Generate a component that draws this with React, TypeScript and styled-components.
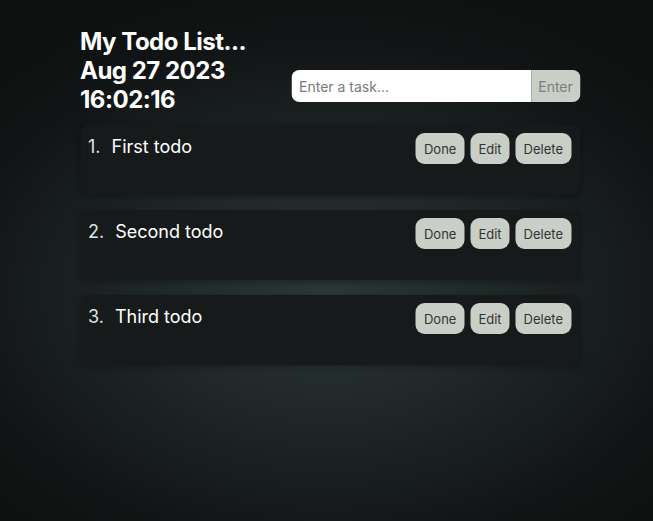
import React from "react";
import styled, { createGlobalStyle } from "styled-components";

const Global = createGlobalStyle`
  html, body { margin: 0; padding: 0; height: 100%; }
  body {
    font-family: Inter, "Noto Sans", sans-serif;
    background: radial-gradient(ellipse 70% 60% at 50% 56%, #2c3737 0%, #1e2525 45%, #121515 80%, #0f1111 100%);
    background-color: #121515;
    min-height: 521px;
  }
  #root { min-height: 521px; }
`;

const Page = styled.div`
  width: 500px;
  margin: 0 auto;
  padding-top: 27px;
  transform: translateX(3.5px);
`;

const Header = styled.header`
  display: flex;
  justify-content: space-between;
  align-items: flex-end;
  margin-bottom: 11px;
`;

const Title = styled.h1`
  margin: 0;
  font-size: 24px;
  line-height: 29px;
  font-weight: 700;
  color: #ffffff;
  letter-spacing: -0.5px;
`;

const Form = styled.form`
  display: flex;
  width: 289px;
  height: 32px;
  margin-bottom: 12px;
  border-radius: 8px;
  overflow: hidden;
`;

const Input = styled.input`
  flex: 1;
  min-width: 0;
  border: none;
  outline: none;
  padding: 0 8px;
  font-family: Inter, sans-serif;
  font-size: 14px;
  background: #ffffff;
  color: #333;
  &::placeholder { color: #7a7a7a; }
`;

const EnterButton = styled.button`
  width: 49px;
  border: none;
  background: #c9cec6;
  color: #7c807b;
  font-family: Inter, sans-serif;
  font-size: 14px;
  padding: 0;
`;

const List = styled.ol`
  list-style: none;
  margin: 0;
  padding: 0;
  display: flex;
  flex-direction: column;
  gap: 15px;
`;

const Card = styled.li`
  height: 70px;
  box-sizing: border-box;
  padding: 8px 9px 8px 8px;
  background: #161a1a;
  border-radius: 8px;
  box-shadow: 0 2px 6px rgba(0, 0, 0, 0.3);
  display: flex;
  justify-content: space-between;
  align-items: flex-start;
`;

const TodoText = styled.div`
  display: flex;
  gap: 11px;
  padding-top: 3px;
  font-size: 18px;
  line-height: 22px;
  color: #ffffff;
`;

const Marker = styled.span`
  color: #dbe5e5;
`;

const Actions = styled.div`
  display: flex;
  gap: 6px;
`;

const ActionButton = styled.button`
  height: 31px;
  padding: 0 8px;
  border: none;
  border-radius: 9px;
  background: #c9cec6;
  color: #333;
  font-family: Inter, sans-serif;
  font-size: 13px;
`;

const todos = ["First todo", "Second todo", "Third todo"];

export default function App() {
  return (
    <>
      <Global />
      <Page>
        <Header>
          <Title>
            My Todo List...
            <br />
            Aug 27 2023
            <br />
            16:02:16
          </Title>
          <Form onSubmit={(e) => e.preventDefault()}>
            <Input placeholder="Enter a task..." />
            <EnterButton type="submit">Enter</EnterButton>
          </Form>
        </Header>
        <List>
          {todos.map((t, i) => (
            <Card key={t}>
              <TodoText>
                <Marker>{i + 1}.</Marker>
                <span>{t}</span>
              </TodoText>
              <Actions>
                <ActionButton>Done</ActionButton>
                <ActionButton>Edit</ActionButton>
                <ActionButton>Delete</ActionButton>
              </Actions>
            </Card>
          ))}
        </List>
      </Page>
    </>
  );
}
